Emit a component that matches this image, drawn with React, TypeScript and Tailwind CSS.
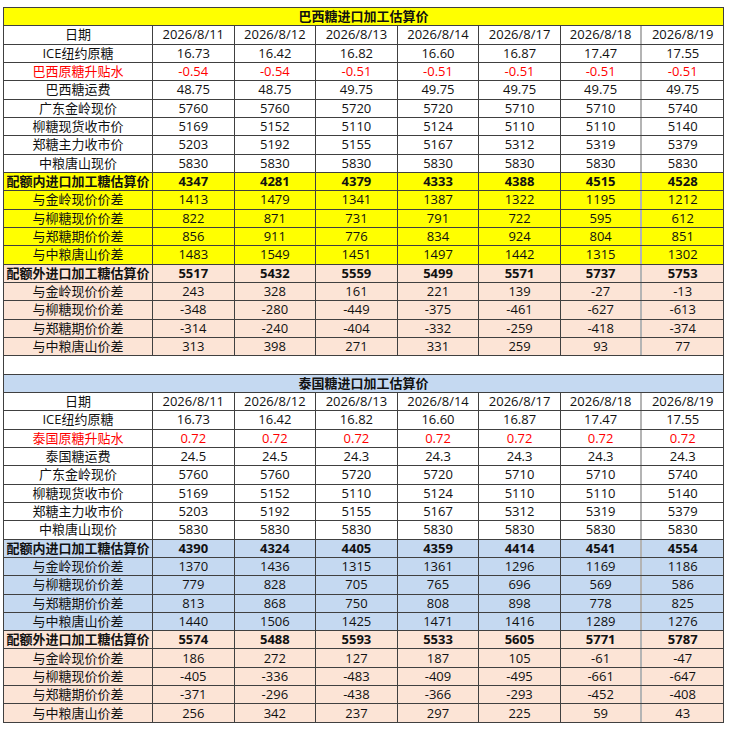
import React from 'react';

type Section = {
  title: string;
  accent: string;
  premiumLabel: string;
  freightLabel: string;
  ice: string[];
  premium: string[];
  freight: string[];
  inQuota: string[];
  inDiffs: string[][];
  outQuota: string[];
  outDiffs: string[][];
};

const dates = ['2026/8/11', '2026/8/12', '2026/8/13', '2026/8/14', '2026/8/17', '2026/8/18', '2026/8/19'];

const spotRows: [string, string[]][] = [
  ['广东金岭现价', ['5760', '5760', '5720', '5720', '5710', '5710', '5740']],
  ['柳糖现货收市价', ['5169', '5152', '5110', '5124', '5110', '5110', '5140']],
  ['郑糖主力收市价', ['5203', '5192', '5155', '5167', '5312', '5319', '5379']],
  ['中粮唐山现价', ['5830', '5830', '5830', '5830', '5830', '5830', '5830']],
];

const diffLabels = ['与金岭现价价差', '与柳糖现价价差', '与郑糖期价价差', '与中粮唐山价差'];

const sections: Section[] = [
  {
    title: '巴西糖进口加工估算价',
    accent: 'bg-[#ffff00]',
    premiumLabel: '巴西原糖升贴水',
    freightLabel: '巴西糖运费',
    ice: ['16.73', '16.42', '16.82', '16.60', '16.87', '17.47', '17.55'],
    premium: ['-0.54', '-0.54', '-0.51', '-0.51', '-0.51', '-0.51', '-0.51'],
    freight: ['48.75', '48.75', '49.75', '49.75', '49.75', '49.75', '49.75'],
    inQuota: ['4347', '4281', '4379', '4333', '4388', '4515', '4528'],
    inDiffs: [
      ['1413', '1479', '1341', '1387', '1322', '1195', '1212'],
      ['822', '871', '731', '791', '722', '595', '612'],
      ['856', '911', '776', '834', '924', '804', '851'],
      ['1483', '1549', '1451', '1497', '1442', '1315', '1302'],
    ],
    outQuota: ['5517', '5432', '5559', '5499', '5571', '5737', '5753'],
    outDiffs: [
      ['243', '328', '161', '221', '139', '-27', '-13'],
      ['-348', '-280', '-449', '-375', '-461', '-627', '-613'],
      ['-314', '-240', '-404', '-332', '-259', '-418', '-374'],
      ['313', '398', '271', '331', '259', '93', '77'],
    ],
  },
  {
    title: '泰国糖进口加工估算价',
    accent: 'bg-[#c5d9f1]',
    premiumLabel: '泰国原糖升贴水',
    freightLabel: '泰国糖运费',
    ice: ['16.73', '16.42', '16.82', '16.60', '16.87', '17.47', '17.55'],
    premium: ['0.72', '0.72', '0.72', '0.72', '0.72', '0.72', '0.72'],
    freight: ['24.5', '24.5', '24.3', '24.3', '24.3', '24.3', '24.3'],
    inQuota: ['4390', '4324', '4405', '4359', '4414', '4541', '4554'],
    inDiffs: [
      ['1370', '1436', '1315', '1361', '1296', '1169', '1186'],
      ['779', '828', '705', '765', '696', '569', '586'],
      ['813', '868', '750', '808', '898', '778', '825'],
      ['1440', '1506', '1425', '1471', '1416', '1289', '1276'],
    ],
    outQuota: ['5574', '5488', '5593', '5533', '5605', '5771', '5787'],
    outDiffs: [
      ['186', '272', '127', '187', '105', '-61', '-47'],
      ['-405', '-336', '-483', '-409', '-495', '-661', '-647'],
      ['-371', '-296', '-438', '-366', '-293', '-452', '-408'],
      ['256', '342', '237', '297', '225', '59', '43'],
    ],
  },
];

function Row({
  label,
  values,
  bg = 'bg-white',
  bold = false,
  red = false,
}: {
  label: string;
  values: string[];
  bg?: string;
  bold?: boolean;
  red?: boolean;
}) {
  const tone = red ? 'text-[#ff0000]' : 'text-[#111]';
  return (
    <div
      className={`grid grid-cols-[149px_repeat(7,minmax(0,1fr))] h-[18.34px] border-b border-[#404040] ${bg} ${
        bold ? 'font-bold' : ''
      }`}
    >
      <div className={`flex items-center justify-center border-r border-[#404040] ${tone}`}>{label}</div>
      {values.map((v, i) => (
        <div
          key={i}
          className={`flex items-center justify-center font-['Open_Sans','Noto_Sans_CJK_SC',sans-serif] ${tone} ${
            i === 5 ? 'border-r-2 border-[#b4b4b4]' : 'border-r border-[#404040]'
          }`}
        >
          {v}
        </div>
      ))}
    </div>
  );
}

function Block({ s }: { s: Section }) {
  return (
    <>
      <div
        className={`h-[18.34px] border-b border-r border-[#404040] ${s.accent} flex items-center justify-center font-bold text-[#111]`}
      >
        {s.title}
      </div>
      <Row label="日期" values={dates} />
      <Row label="ICE纽约原糖" values={s.ice} />
      <Row label={s.premiumLabel} values={s.premium} red />
      <Row label={s.freightLabel} values={s.freight} />
      {spotRows.map(([label, vals]) => (
        <Row key={label} label={label} values={vals} />
      ))}
      <Row label="配额内进口加工糖估算价" values={s.inQuota} bg={s.accent} bold />
      {s.inDiffs.map((vals, i) => (
        <Row key={i} label={diffLabels[i]} values={vals} bg={s.accent} />
      ))}
      <Row label="配额外进口加工糖估算价" values={s.outQuota} bg="bg-[#fce4d6]" bold />
      {s.outDiffs.map((vals, i) => (
        <Row key={i} label={diffLabels[i]} values={vals} bg="bg-[#fce4d6]" />
      ))}
    </>
  );
}

export default function App() {
  return (
    <div className="w-[738px] h-[731px] bg-white pt-[7px] pl-[3px] font-['Open_Sans','Noto_Sans_CJK_SC',sans-serif] text-[13px] leading-none">
      <div className="w-[721px] border-l border-t border-[#404040]">
        <Block s={sections[0]} />
        <div className="h-[18.34px] border-b border-r border-[#404040] bg-white" />
        <Block s={sections[1]} />
      </div>
    </div>
  );
}
